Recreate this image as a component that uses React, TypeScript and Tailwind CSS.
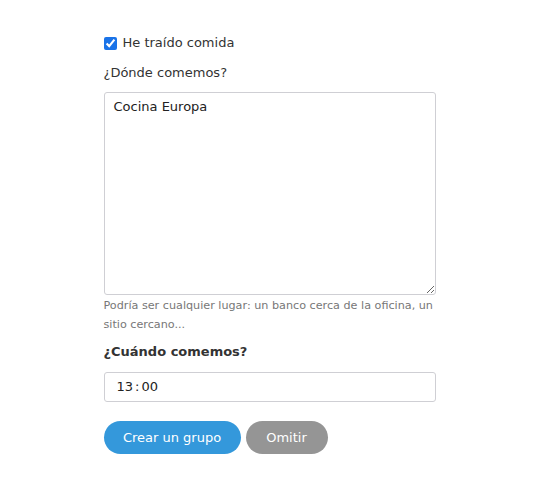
import {useState} from 'react';

const App = () => {
  const [brought, setBrought] = useState(true);
  const [place, setPlace] = useState('Cocina Europa');

  return (
    <div className="min-h-screen bg-white font-['DejaVu_Sans',sans-serif] text-[13px] text-[#333]">
      <div className="mx-auto w-[332px] pt-[33px] -translate-x-[4px]">
        <label className="flex h-5 items-center gap-[6px] leading-5">
          <input
            type="checkbox"
            checked={brought}
            onChange={(e) => setBrought(e.target.checked)}
            className="m-0 h-[13px] w-[13px] accent-[#1a73e8]"
          />
          <span>He traído comida</span>
        </label>

        <div className="mt-[10px] leading-5">¿Dónde comemos?</div>
        <textarea
          value={place}
          onChange={(e) => setPlace(e.target.value)}
          className="mt-[9px] block h-[203px] w-full rounded-[3px] border border-[#cfcfd4] px-[9px] py-[4px] text-[13px] leading-5 text-[#222] outline-none"
        />
        <p className="mt-px text-[11.2px] leading-[19px] text-[#777]">
          Podría ser cualquier lugar: un banco cerca de la oficina, un sitio cercano...
        </p>

        <div className="mt-[8px] font-bold leading-5">¿Cuándo comemos?</div>
        <div className="mt-[10px] flex h-[30px] w-full items-center rounded-[3px] border border-[#cfcfd4] px-3 text-[13px] text-[#222]">
          <span>13</span>
          <span className="mx-[2px]">:</span>
          <span>00</span>
        </div>

        <div className="mt-[19px] flex gap-[5px]">
          <button className="h-[33px] w-[137px] rounded-full bg-[#3498db] text-[13px] text-white">
            Crear un grupo
          </button>
          <button className="h-[33px] w-[82px] rounded-full bg-[#959595] text-[13px] text-white">
            Omitir
          </button>
        </div>
      </div>
    </div>
  );
};

export default App;
